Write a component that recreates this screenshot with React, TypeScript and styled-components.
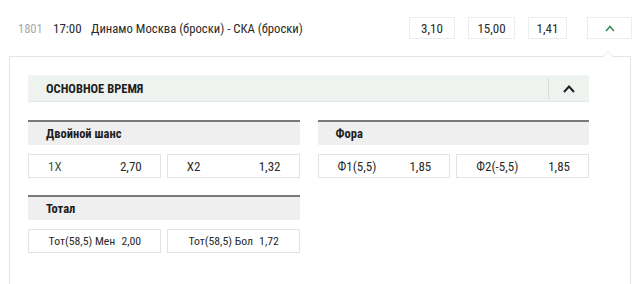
import styled, { createGlobalStyle } from "styled-components";

const GlobalStyle = createGlobalStyle`
  html, body {
    margin: 0;
    padding: 0;
    background: #fff;
  }
  body {
    font-family: "Roboto Condensed", Roboto, "Liberation Sans", sans-serif;
    color: #333;
  }
`;

type Outcome = { label: string; value: string; accent?: boolean };
type Market = { title: string; compact?: boolean; outcomes: Outcome[] };

const markets: Market[] = [
  {
    title: "Двойной шанс",
    outcomes: [
      { label: "1X", value: "2,70", accent: true },
      { label: "X2", value: "1,32" },
    ],
  },
  {
    title: "Фора",
    outcomes: [
      { label: "Ф1(5,5)", value: "1,85" },
      { label: "Ф2(-5,5)", value: "1,85" },
    ],
  },
  {
    title: "Тотал",
    compact: true,
    outcomes: [
      { label: "Тот(58,5) Мен", value: "2,00" },
      { label: "Тот(58,5) Бол", value: "1,72" },
    ],
  },
];

function Chevron({ size, color, weight }: { size: number; color: string; weight: number }) {
  return (
    <svg width={size} height={size / 2 + 2} viewBox={`0 0 ${size} ${size / 2 + 2}`}>
      <polyline
        points={`1,${size / 2 + 1} ${size / 2},1.5 ${size - 1},${size / 2 + 1}`}
        fill="none"
        stroke={color}
        strokeWidth={weight}
      />
    </svg>
  );
}

export default function App() {
  return (
    <>
      <GlobalStyle />
      <EventRow>
        <EventNum>1801</EventNum>
        <EventTime>17:00</EventTime>
        <EventName>Динамо Москва (броски) - СКА (броски)</EventName>
        <OddsGroup>
          <OddBox $w={46}>3,10</OddBox>
          <OddBox $w={47}>15,00</OddBox>
          <OddBox $w={39}>1,41</OddBox>
          <ToggleBox $w={45}>
            <Chevron size={10} color="#3a8a5e" weight={1.6} />
          </ToggleBox>
        </OddsGroup>
      </EventRow>

      <Panel>
        <SectionHeader>
          <SectionTitle>Основное время</SectionTitle>
          <SectionToggle>
            <Chevron size={12} color="#1f1f1f" weight={2} />
          </SectionToggle>
        </SectionHeader>

        <MarketGrid>
          {markets.map((m) => (
            <MarketBlock key={m.title}>
              <MarketHeader>{m.title}</MarketHeader>
              <OutcomeRow>
                {m.outcomes.map((o) => (
                  <OutcomeBox key={o.label} $compact={m.compact}>
                    <OutcomeLabel $accent={o.accent}>{o.label}</OutcomeLabel>
                    <span>{o.value}</span>
                  </OutcomeBox>
                ))}
              </OutcomeRow>
            </MarketBlock>
          ))}
        </MarketGrid>
      </Panel>
    </>
  );
}

const EventRow = styled.div`
  display: flex;
  align-items: center;
  padding: 17px 8px 0 18px;
  height: 22px;
  font-size: 13px;
`;

const EventNum = styled.span`
  color: #a8a8a8;
  font-size: 12.5px;
  width: 35px;
`;

const EventTime = styled.span`
  color: #2a2a2a;
  width: 38px;
`;

const EventName = styled.span`
  color: #2a2a2a;
  font-size: 12.7px;
`;

const OddsGroup = styled.div`
  margin-left: auto;
  display: flex;
  gap: 13px;
`;

const OddBox = styled.div<{ $w: number }>`
  width: ${(p) => p.$w}px;
  height: 22px;
  box-sizing: border-box;
  border: 1px solid #ececec;
  display: flex;
  align-items: center;
  justify-content: center;
  color: #2a2a2a;
  font-size: 13px;
`;

const ToggleBox = styled(OddBox)`
  margin-left: 7px;
`;

const Panel = styled.div`
  position: relative;
  margin: 17px 9px 0 9px;
  border: 1px solid #e4e4e4;
  border-bottom: none;
  padding: 18px 41px 40px 18px;
  min-height: 300px;
  box-sizing: border-box;

  &::before,
  &::after {
    content: "";
    position: absolute;
    right: 17px;
    width: 0;
    height: 0;
    border-left: 5px solid transparent;
    border-right: 5px solid transparent;
  }
  &::before {
    top: -6px;
    border-bottom: 5px solid #e4e4e4;
  }
  &::after {
    top: -5px;
    border-bottom: 5px solid #fff;
  }
`;

const SectionHeader = styled.div`
  display: flex;
  align-items: stretch;
  height: 27px;
  box-sizing: border-box;
  background: #eef3ef;
  border-top: 1px solid #f3f6f4;
  border-bottom: 1px solid #e2e8e4;
`;

const SectionTitle = styled.div`
  flex: 1;
  display: flex;
  align-items: center;
  padding-left: 18px;
  font-weight: 700;
  font-size: 12.5px;
  text-transform: uppercase;
  color: #1e1e1e;
`;

const SectionToggle = styled.div`
  width: 40px;
  margin: 2px 0;
  border-left: 1px solid #d6ddd8;
  display: flex;
  align-items: center;
  justify-content: center;
`;

const MarketGrid = styled.div`
  margin-top: 18px;
  display: grid;
  grid-template-columns: 1fr 1fr;
  column-gap: 18px;
  row-gap: 17px;
`;

const MarketBlock = styled.div`
  display: flex;
  flex-direction: column;
  gap: 9px;
`;

const MarketHeader = styled.div`
  height: 25px;
  box-sizing: border-box;
  border-top: 2px solid #7a7a7a;
  background: #efefef;
  display: flex;
  align-items: center;
  padding-left: 18px;
  font-weight: 700;
  font-size: 12.5px;
  color: #1e1e1e;
`;

const OutcomeRow = styled.div`
  display: grid;
  grid-template-columns: 1fr 1fr;
  gap: 6px;
`;

const OutcomeBox = styled.div<{ $compact?: boolean }>`
  height: 24px;
  box-sizing: border-box;
  border: 1px solid #e3e3e3;
  display: flex;
  align-items: center;
  justify-content: ${(p) => (p.$compact ? "center" : "space-between")};
  gap: ${(p) => (p.$compact ? "6px" : "0")};
  padding: 0 18px 0 19px;
  font-size: ${(p) => (p.$compact ? "11.8px" : "13px")};
  color: #2a2a2a;
  white-space: nowrap;
`;

const OutcomeLabel = styled.span<{ $accent?: boolean }>`
  color: ${(p) => (p.$accent ? "#3b5e46" : "#2a2a2a")};
`;
